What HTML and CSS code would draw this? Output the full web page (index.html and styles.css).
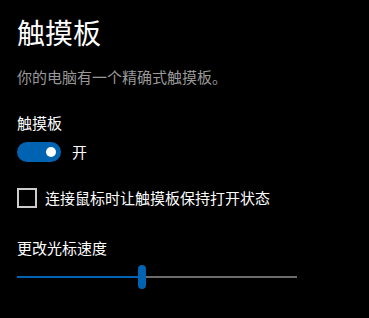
FILE: index.html
```html
<!DOCTYPE html>
<html lang="zh-CN">
<head>
<meta charset="utf-8">
<link rel="stylesheet" href="styles.css">
</head>
<body>
<main class="page">
  <h1 class="title">触摸板</h1>
  <p class="desc">你的电脑有一个精确式触摸板。</p>
  <div class="label">触摸板</div>
  <div class="toggle-row">
    <span class="toggle"><span class="knob"></span></span>
    <span class="toggle-text">开</span>
  </div>
  <label class="check-row">
    <span class="checkbox"></span>
    <span class="check-text">连接鼠标时让触摸板保持打开状态</span>
  </label>
  <div class="label slider-label">更改光标速度</div>
  <div class="slider">
    <span class="fill" style="width:121px"></span>
    <span class="thumb"></span>
    <span class="rest"></span>
  </div>
</main>
</body>
</html>
```

FILE: styles.css
```css
html, body {
  margin: 0;
  padding: 0;
  background: #000;
}
body {
  width: 369px;
  height: 318px;
  overflow: hidden;
  font-family: "Noto Sans CJK SC", "Noto Sans", sans-serif;
  color: #fff;
}
.page {
  padding: 12px 0 0 17px;
  display: flex;
  flex-direction: column;
  align-items: flex-start;
}
.title {
  margin: 0;
  font-size: 28px;
  font-weight: 400;
  line-height: 40px;
}
.desc {
  margin: 15px 0 0;
  font-size: 15px;
  line-height: 20px;
  color: #999;
}
.label {
  margin-top: 26px;
  font-size: 15px;
  line-height: 20px;
}
.toggle-row {
  margin-top: 9px;
  display: flex;
  align-items: center;
  height: 20px;
}
.toggle {
  width: 44px;
  height: 20px;
  border-radius: 10px;
  background: #0063b1;
  display: flex;
  align-items: center;
  justify-content: flex-end;
  padding-right: 5px;
  box-sizing: border-box;
}
.knob {
  width: 10px;
  height: 10px;
  border-radius: 50%;
  background: #fff;
}
.toggle-text {
  margin-left: 11px;
  font-size: 15px;
  line-height: 20px;
}
.check-row {
  margin-top: 26px;
  display: flex;
  align-items: center;
  height: 20px;
}
.checkbox {
  width: 20px;
  height: 20px;
  box-sizing: border-box;
  border: 2px solid #cccccc;
}
.check-text {
  margin-left: 8px;
  font-size: 15px;
  line-height: 20px;
}
.slider-label {
  margin-top: 30px;
}
.slider {
  margin-top: 7px;
  width: 280px;
  height: 24px;
  display: flex;
  align-items: center;
}
.fill {
  height: 2px;
  background: #0063b1;
}
.thumb {
  width: 8px;
  height: 24px;
  border-radius: 4px;
  background: #0063b1;
}
.rest {
  flex: 1;
  height: 2px;
  background: #6b6b6b;
}
```
